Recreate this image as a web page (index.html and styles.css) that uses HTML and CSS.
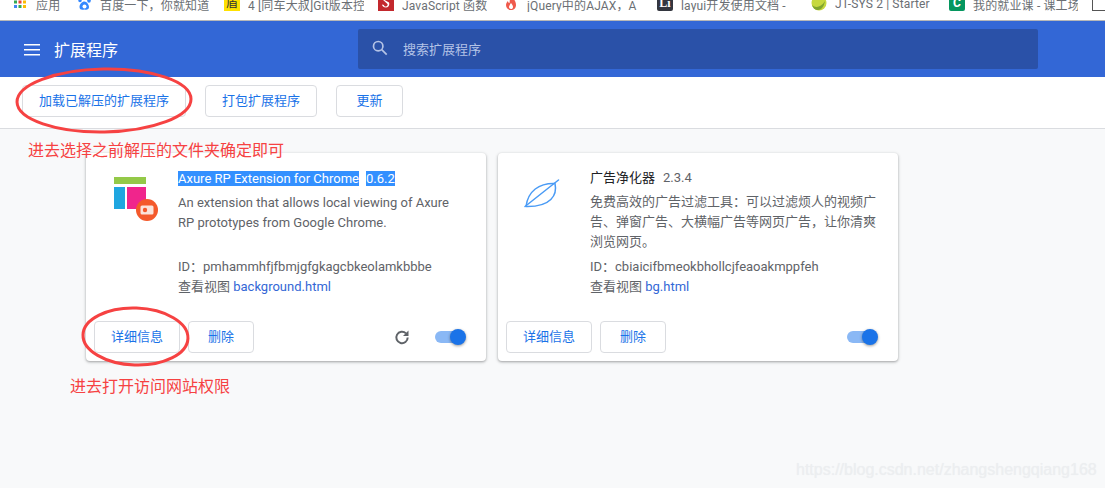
FILE: index.html
```html
<!DOCTYPE html>
<html lang="zh">
<head>
<meta charset="utf-8">
<title>扩展程序</title>
<link rel="stylesheet" href="styles.css">
</head>
<body>
<div class="page">
  <nav class="bookmarks">
    <div class="bm">
      <svg class="bm-ico" viewBox="0 0 16 16"><g><rect x="2" y="1" width="3" height="3" fill="#ea4335"/><rect x="6.5" y="1" width="3" height="3" fill="#fbbc05"/><rect x="11" y="1" width="3" height="3" fill="#4285f4"/><rect x="2" y="5.5" width="3" height="3" fill="#34a853"/><rect x="6.5" y="5.5" width="3" height="3" fill="#ea4335"/><rect x="11" y="5.5" width="3" height="3" fill="#fbbc05"/><rect x="2" y="10" width="3" height="3" fill="#4285f4"/><rect x="6.5" y="10" width="3" height="3" fill="#34a853"/><rect x="11" y="10" width="3" height="3" fill="#fbbc05"/></g></svg>
      <span class="bm-text">应用</span>
    </div>
    <div class="bm">
      <svg class="bm-ico" viewBox="0 0 16 16"><g fill="#3388ff"><ellipse cx="4" cy="5" rx="1.8" ry="2.3"/><ellipse cx="7" cy="2.5" rx="1.8" ry="2.3"/><ellipse cx="10.5" cy="2.5" rx="1.8" ry="2.3"/><ellipse cx="13" cy="5.5" rx="1.8" ry="2.3"/><path d="M8.5 6.5c2 0 4.500 3 4.500 5.500s-2 3-4.500 2.500c-2.500.5-5 .5-5-2.500s2.500-5.500 5-5.500z"/></g><circle cx="8.500" cy="11.500" r="2" fill="#fff"/></svg>
      <span class="bm-text">百度一下，你就知道</span>
    </div>
    <div class="bm">
      <span class="bm-box bm-yellow">盾</span>
      <span class="bm-text">4 [同车大叔]Git版本控</span>
    </div>
    <div class="bm">
      <svg class="bm-ico" viewBox="0 0 16 16"><rect width="16" height="16" fill="#c3282d"/><path d="M4 4l8-1.500-1 2-4.500.5 4.500 2.500c1 2.500-.5 5-3 5S4 11 4 9.500l2 .5c0 1 1 1.500 2 1.500S10 10 9.500 9z" fill="#fff"/></svg>
      <span class="bm-text">JavaScript 函数</span>
    </div>
    <div class="bm">
      <svg class="bm-ico" viewBox="0 0 16 16"><path d="M8 0c1 3 5 5 5 10 0 3-2 5-5 5s-5-2-5-5c0-2 1-3 2-4 0 1 .5 2 1.500 2C7 6 6.500 3 8 0z" fill="#ef5a4c"/><path d="M8 8c1 1.500 2 2.500 2 4s-1 2-2 2-2-1-2-2 1-2.500 2-4z" fill="#fff"/></svg>
      <span class="bm-text">jQuery中的AJAX，A</span>
    </div>
    <div class="bm">
      <span class="bm-box bm-dark">Li</span>
      <span class="bm-text">layui开发使用文档 -</span>
    </div>
    <div class="bm">
      <svg class="bm-ico" viewBox="0 0 16 16"><circle cx="8" cy="8" r="7.500" fill="#c6d83e"/><path d="M1 10c3 3 9 3 13-4-1 6-4 9-7 9-3 0-5-2-6-5z" fill="#7fa52e"/></svg>
      <span class="bm-text">JT-SYS 2 | Starter</span>
    </div>
    <div class="bm">
      <span class="bm-box bm-green">C</span>
      <span class="bm-text">我的就业课 - 课工场</span>
    </div>
    <div class="bm">
      <span class="bm-box bm-outline"></span>
    </div>
  </nav>

  <header class="topbar">
    <div class="brand">
      <svg class="menu-ico" viewBox="0 0 16 12"><path d="M0 .75h16M0 5.750h16M0 10.750h16" stroke="#fff" stroke-width="1.700" fill="none"/></svg>
      <h1 class="brand-title">扩展程序</h1>
    </div>
    <div class="search">
      <svg class="search-ico" viewBox="0 0 16 16"><circle cx="6.200" cy="6.200" r="4.700" fill="none" stroke="#b4c3e6" stroke-width="1.700"/><path d="M9.700 9.700l5 5" stroke="#b4c3e6" stroke-width="1.700"/></svg>
      <span class="search-text">搜索扩展程序</span>
    </div>
  </header>

  <div class="toolbar">
    <button class="btn btn-load">加载已解压的扩展程序</button>
    <button class="btn btn-pack">打包扩展程序</button>
    <button class="btn btn-update">更新</button>
  </div>

  <main class="cards">
    <article class="card">
      <div class="card-body">
        <div class="card-icon">
          <svg class="axure" viewBox="0 0 46 46">
            <rect x="0" y="0" width="32" height="7" fill="#94c948"/>
            <rect x="0" y="10" width="11" height="22" fill="#1fa6e0"/>
            <rect x="13" y="10" width="19" height="22" fill="#f0258c"/>
            <circle cx="33" cy="33" r="11" fill="#f4592b"/>
            <rect x="26.500" y="28.500" width="13" height="9" rx="1.500" fill="#fbe3da"/>
            <circle cx="31" cy="33" r="2.200" fill="#f4592b"/>
          </svg>
        </div>
        <div class="card-main">
          <div class="card-title"><span class="selected">Axure RP Extension for Chrome</span><span class="selected ver-gap">0.6.2</span></div>
          <p class="card-desc desc-latin">An extension that allows local viewing of Axure RP prototypes from Google Chrome.</p>
          <div class="card-line">ID：pmhammhfjfbmjgfgkagcbkeolamkbbbe</div>
          <div class="card-line">查看视图 <a class="card-link">background.html</a></div>
        </div>
      </div>
      <div class="card-foot">
        <button class="btn btn-detail">详细信息</button>
        <button class="btn btn-remove">删除</button>
        <span class="spacer"></span>
        <svg class="reload" viewBox="0 0 16 16"><path d="M13.700 8.500A5.700 5.700 0 1 1 12 4.400" fill="none" stroke="#5f6368" stroke-width="2"/><path d="M14.500 1.500v5.500H9z" fill="#5f6368"/></svg>
        <span class="toggle"><span class="toggle-thumb"></span></span>
      </div>
    </article>

    <article class="card">
      <div class="card-body">
        <div class="card-icon">
          <svg class="leaf" viewBox="0 0 36 30">
            <path d="M34.500 1L1 27.500" fill="none" stroke="#4a9bf5" stroke-width="1.500" stroke-linecap="round"/>
            <path d="M2 27.500C4 12 15 4 31 4.500 33.500 16 27 28 2 27.500z" fill="none" stroke="#4a9bf5" stroke-width="1.500" stroke-linejoin="round"/>
          </svg>
        </div>
        <div class="card-main">
          <div class="card-title"><span class="name">广告净化器</span><span class="version">2.3.4</span></div>
          <p class="card-desc">免费高效的广告过滤工具：可以过滤烦人的视频广告、弹窗广告、大横幅广告等网页广告，让你清爽浏览网页。</p>
          <div class="card-line">ID：cbiaicifbmeokbhollcjfeaoakmppfeh</div>
          <div class="card-line">查看视图 <a class="card-link">bg.html</a></div>
        </div>
      </div>
      <div class="card-foot">
        <button class="btn btn-detail">详细信息</button>
        <button class="btn btn-remove">删除</button>
        <span class="spacer"></span>
        <span class="toggle"><span class="toggle-thumb"></span></span>
      </div>
    </article>
  </main>
</div>

<svg class="marks" viewBox="0 0 1105 488">
  <ellipse cx="104" cy="100.500" rx="87" ry="31.500" transform="rotate(-1 104 100)" fill="none" stroke="#f64242" stroke-width="3"/>
  <ellipse cx="135.500" cy="336.500" rx="52.500" ry="28.500" transform="rotate(2 135 336)" fill="none" stroke="#f64242" stroke-width="3"/>
</svg>
<div class="note note-one">进去选择之前解压的文件夹确定即可</div>
<div class="note note-two">进去打开访问网站权限</div>
<div class="watermark">https://blog.csdn.net/zhangshengqiang168</div>
</body>
</html>
```
FILE: styles.css
```css
* { box-sizing: border-box; }
html, body { margin: 0; padding: 0; height: 100%; overflow: hidden; }
body {
  position: relative;
  background: #f8f9fa;
  font-family: Roboto, "Noto Sans CJK SC", sans-serif;
  font-size: 13px;
  color: #5f6368;
}
.page { display: flex; flex-direction: column; height: 488px; }

/* bookmarks bar */
.bookmarks {
  height: 21px;
  flex: none;
  background: #fff;
  border-bottom: 1px solid #b8b8b8;
  padding-left: 12px;
  display: grid;
  grid-template-columns: 64px 148px 154px 125px 154px 154px 138px 143px 20px;
  overflow: hidden;
}
.bm {
  display: flex;
  align-items: center;
  gap: 8px;
  height: 16px;
  margin-top: -4px;
  overflow: hidden;
  white-space: nowrap;
  padding-right: 14px;
}
.bm-ico { width: 16px; height: 16px; flex: none; margin-top: -2px; }
.bm-text { font-size: 12px; color: #6b6f74; overflow: hidden; letter-spacing: .15px; }
.bm-box {
  width: 16px; height: 16px; flex: none;
  margin-top: -2px;
  display: flex; align-items: center; justify-content: center;
  font-size: 12px; line-height: 16px; border-radius: 2px;
}
.bm-yellow { background: #ffe100; color: #333; border-radius: 0; }
.bm-dark { background: #33363f; color: #fff; font-family: "Liberation Serif", serif; font-weight: 700; }
.bm-green { background: #05965f; color: #fff; font-weight: 700; }
.bm-outline { border: 1px solid #555; border-radius: 0; }

/* top bar */
.topbar {
  height: 56px;
  flex: none;
  background: #3367d6;
  display: flex;
  align-items: center;
}
.brand { width: 358px; flex: none; display: flex; align-items: center; padding-left: 24px; gap: 14px; }
.menu-ico { width: 16px; height: 12px; flex: none; margin-top: 2px; }
.brand-title { margin: 4px 0 0; font-size: 16px; line-height: 20px; font-weight: 400; color: #fff; }
.search {
  width: 680px; height: 40px;
  background: #2a51a8;
  border-radius: 2px;
  display: flex;
  align-items: center;
  padding: 0 0 2px 14px;
}
.search-ico { width: 16px; height: 16px; flex: none; margin-right: 15px; }
.search-text { font-size: 13px; color: #b4c3e6; }

/* toolbar */
.toolbar {
  height: 52px;
  flex: none;
  background: #fff;
  border-bottom: 1px solid #dadce0;
  display: flex;
  align-items: flex-start;
  padding: 8px 0 0 22px;
}
.btn {
  height: 32px;
  padding: 0;
  background: #fff;
  border: 1px solid #dadce0;
  border-radius: 4px;
  color: #1a73e8;
  font: 13px/30px Roboto, "Noto Sans CJK SC", sans-serif;
}
.btn-load { width: 164px; }
.btn-pack { width: 112px; margin-left: 19px; }
.btn-update { width: 67px; margin-left: 19px; }
.btn-detail { width: 86px; }
.btn-remove { width: 66px; margin-left: 8px; }

/* cards */
.cards { display: flex; gap: 12px; padding: 24px 0 0 86px; }
.card {
  width: 400px; height: 208px;
  background: #fff;
  border-radius: 4px;
  box-shadow: 0 1px 2px rgba(60,64,67,.3), 0 1px 3px 1px rgba(60,64,67,.15);
  display: flex;
  flex-direction: column;
}
.card-body { display: flex; padding-top: 15px; }
.card-icon { width: 92px; flex: none; padding: 9px 0 0 26px; }
.axure { width: 46px; height: 46px; display: block; overflow: visible; margin-left: 2px; }
.leaf { width: 36px; height: 30px; display: block; margin-top: 2px; }
.card-main { width: 288px; }
.card-title { height: 20px; line-height: 20px; white-space: nowrap; display: flex; align-items: center; }
.selected { background: #3390ff; color: #fff; line-height: 15px; }
.ver-gap { margin-left: 7px; }
.name { color: #202124; }
.version { margin-left: 8px; }
.card-desc { margin: 4px 0 5px; line-height: 20px; height: 60px; }
.desc-latin { padding-top: 1px; }
.card-line { line-height: 20px; white-space: nowrap; }
.card-link { color: #3367d6; }
.card-foot {
  margin-top: auto;
  display: flex;
  align-items: center;
  padding: 0 23px 8px 8px;
}
.spacer { flex: 1; }
.reload { width: 16px; height: 16px; margin-right: 25px; }
.toggle {
  position: relative;
  width: 28px; height: 12px;
  border-radius: 6px;
  background: #8ab8f5;
  display: block;
}
.toggle-thumb {
  position: absolute;
  right: -3px; top: -2px;
  width: 16px; height: 16px;
  border-radius: 50%;
  background: #1a73e8;
  box-shadow: 0 1px 3px rgba(0,0,0,.4);
}

/* annotations drawn on top of the screenshot */
.marks { position: absolute; left: 0; top: 0; width: 1105px; height: 488px; pointer-events: none; }
.note { position: absolute; font-size: 16px; line-height: 22px; color: #f64242; white-space: nowrap; }
.note-one { left: 28px; top: 140px; }
.note-two { left: 70px; top: 376px; }
.watermark {
  position: absolute;
  left: 796px; top: 460px;
  font: 16px/20px "Liberation Sans", sans-serif;
  color: #eceef0;
  text-shadow: 0 0 1px #eceef0;
  white-space: nowrap;
}
```
